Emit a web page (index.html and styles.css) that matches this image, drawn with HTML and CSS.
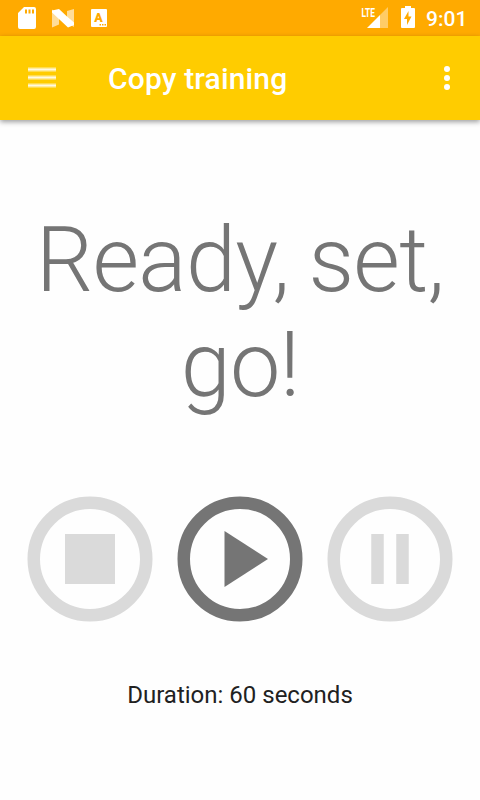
FILE: index.html
```html
<!DOCTYPE html>
<html lang="en">
<head>
<meta charset="utf-8">
<title>Copy training</title>
<link rel="stylesheet" href="styles.css">
</head>
<body>
<div class="status">
  <svg class="status-left" width="120" height="36" viewBox="0 0 120 36">
    <path fill="#fff" fill-rule="evenodd" d="M24 7h10a2 2 0 0 1 2 2v18a2 2 0 0 1-2 2H20a2 2 0 0 1-2-2V13zM25 9.500v4h2v-4zM28.500 9.500v4h2v-4zM32 9.500v4h2v-4z"/>
    <path fill="#fff" opacity=".6" d="M52 9.500l7 5v10l-7 3zM67 11l7-2v18l-7-4z"/>
    <path fill="#fff" d="M52 10.500L59 9l8 7.500 7 6V25l-6 2.500L52 12.500z"/>
    <path fill="#fff" d="M92 9h14a1 1 0 0 1 1 1v16a1 1 0 0 1-1 1H92a1 1 0 0 1-1-1V10a1 1 0 0 1 1-1z"/>
    <text class="badge-letter" x="98.500" y="22" text-anchor="middle">A</text>
    <path fill="#ffaa00" d="M99.500 24v1.500h1.500V24zM102 24v1.500h1.500V24zM104.500 24v1.500h1.500V24z"/>
  </svg>
  <div class="status-right">
    <svg width="60" height="36" viewBox="360 0 60 36">
      <text class="network" x="361.500" y="16.500" textLength="13.500" lengthAdjust="spacingAndGlyphs">LTE</text>
      <path fill="#fff" opacity=".4" d="M388 7v21h-8V15z"/>
      <path fill="#fff" d="M380 15v13h-13z"/>
      <path fill="#fff" fill-rule="evenodd" d="M405 6h6v2h3a1 1 0 0 1 1 1v18a1 1 0 0 1-1 1h-12a1 1 0 0 1-1-1V9a1 1 0 0 1 1-1h3zM408.500 11l-4.500 8h3v6l4.500-8.500h-3z"/>
    </svg>
    <span class="clock">9:01</span>
  </div>
</div>
<header class="bar">
  <svg class="menu" width="28" height="22" viewBox="0 0 28 22">
    <path fill="#fff" fill-opacity=".62" d="M0 .5h28v4H0zM0 8.500h28v4H0zM0 16.500h28v4H0z"/>
    <path fill="#fff" fill-opacity=".7" d="M0 2h28v1H0zM0 10h28v1H0zM0 18h28v1H0z"/>
  </svg>
  <h1 class="title">Copy training</h1>
  <svg class="more" width="6" height="26" viewBox="0 0 6 26"><g fill="#fff"><circle cx="3" cy="4" r="3"/><circle cx="3" cy="13" r="3"/><circle cx="3" cy="22" r="3"/></g></svg>
</header>
<main class="content">
  <p class="prompt">Ready, set, go!</p>
  <div class="controls">
    <svg class="control disabled" viewBox="0 0 126 126"><circle class="ring" cx="63" cy="63" r="56.250"/><path d="M38 38h50v50H38z"/></svg>
    <svg class="control" viewBox="0 0 126 126"><circle class="ring" cx="63" cy="63" r="56.250"/><path d="M47.500 35v56L91 63z"/></svg>
    <svg class="control disabled" viewBox="0 0 126 126"><circle class="ring" cx="63" cy="63" r="56.250"/><path d="M44.250 38h12.500v50h-12.500zM69.250 38h12.500v50h-12.500z"/></svg>
  </div>
  <p class="duration">Duration: 60 seconds</p>
</main>
</body>
</html>
```
FILE: styles.css
```css
body {
  margin: 0;
  height: 800px;
  overflow: hidden;
  background: #fefefe;
  font-family: Roboto, "Liberation Sans", sans-serif;
}
svg { display: block; }
.status {
  display: flex;
  justify-content: space-between;
  height: 36px;
  background: #ffaa00;
}
.badge-letter {
  fill: #ffaa00;
  font-size: 12.5px;
  font-weight: 900;
}
.network {
  fill: #fff;
  font-size: 13px;
  font-weight: 700;
}
.status-right {
  display: flex;
  padding-right: 13px;
}
.clock {
  width: 41px;
  margin-left: 6px;
  color: #fff;
  font-size: 21px;
  font-weight: 500;
  line-height: 38px;
  white-space: nowrap;
}
.bar {
  display: flex;
  align-items: center;
  box-sizing: border-box;
  height: 84px;
  padding: 0 30px 0 28px;
  background: #ffcc00;
  box-shadow: 0 2px 5px rgba(0, 0, 0, .38);
}
.title {
  flex: 1;
  margin: 2px 0 0 52px;
  color: #fff;
  font-size: 30px;
  font-weight: 500;
  line-height: 36px;
  letter-spacing: .15px;
}
.content {
  display: flex;
  flex-direction: column;
  align-items: center;
  padding-top: 88px;
}
.prompt {
  width: 432px;
  margin: 0;
  color: #757575;
  font-size: 90px;
  font-weight: 300;
  line-height: 105px;
  letter-spacing: -.7px;
  word-spacing: -2px;
  text-align: center;
}
.controls {
  display: flex;
  gap: 24px;
  margin-top: 78px;
}
.control {
  width: 126px;
  height: 126px;
  fill: #757575;
  stroke: none;
}
.ring {
  fill: none;
  stroke: #757575;
  stroke-width: 12.5;
}
.disabled { fill: #dadada; }
.disabled .ring { stroke: #dadada; }
.duration {
  margin: 59px 0 0;
  color: #212121;
  font-size: 24px;
  line-height: 28px;
}
```
